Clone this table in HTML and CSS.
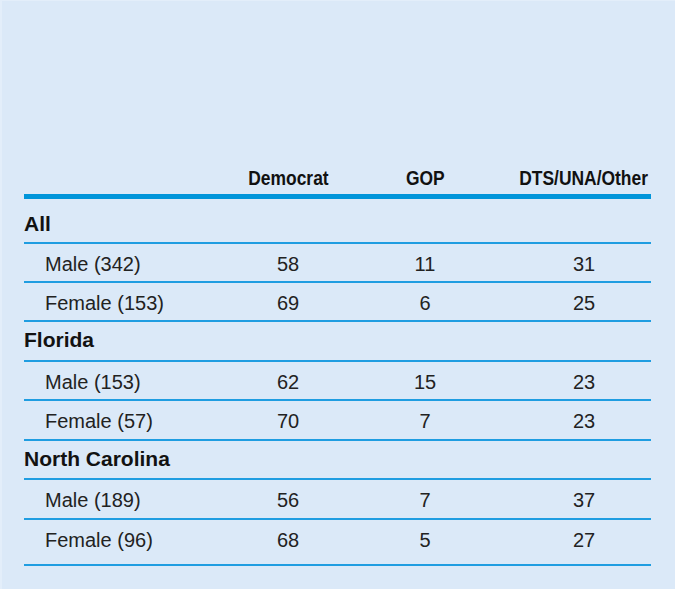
FILE: index.html
```html
<!DOCTYPE html>
<html lang="en">
<head>
<meta charset="utf-8">
<title>Party affiliation by gender</title>
<link rel="stylesheet" href="styles.css">
</head>
<body>
<div class="panel">
  <div class="table">
    <div class="row head">
      <div class="cell"></div>
      <div class="cell hcell"><span class="hd">Democrat</span></div>
      <div class="cell hcell gop"><span class="hd">GOP</span></div>
      <div class="cell hcell"><span class="hd">DTS/UNA/Other</span></div>
    </div>

    <div class="row group first"><div class="cell">All</div></div>
    <div class="row data"><div class="cell label">Male (342)</div><div class="cell num">58</div><div class="cell num gop">11</div><div class="cell num">31</div></div>
    <div class="row data"><div class="cell label">Female (153)</div><div class="cell num">69</div><div class="cell num gop">6</div><div class="cell num">25</div></div>

    <div class="row group"><div class="cell">Florida</div></div>
    <div class="row data"><div class="cell label">Male (153)</div><div class="cell num">62</div><div class="cell num gop">15</div><div class="cell num">23</div></div>
    <div class="row data"><div class="cell label">Female (57)</div><div class="cell num">70</div><div class="cell num gop">7</div><div class="cell num">23</div></div>

    <div class="row group"><div class="cell">North Carolina</div></div>
    <div class="row data"><div class="cell label">Male (189)</div><div class="cell num">56</div><div class="cell num gop">7</div><div class="cell num">37</div></div>
    <div class="row data last"><div class="cell label">Female (96)</div><div class="cell num">68</div><div class="cell num gop">5</div><div class="cell num">27</div></div>
  </div>
</div>
</body>
</html>
```

FILE: styles.css
```css
html, body {
  margin: 0;
  padding: 0;
}

body {
  background: #dbe9f8;
  font-family: "Liberation Sans", Arial, sans-serif;
  color: #1c1c1c;
}

.panel {
  width: 675px;
  height: 589px;
  box-sizing: border-box;
  padding: 166px 24px 0 24px;
  background: #dbe9f8;
  border-left: 2px solid #e3eefa;
  border-top: 1px solid #e3eefa;
}

.table {
  width: 627px;
  margin-left: -2px;
}

.row {
  display: grid;
  grid-template-columns: 221px 86px 186px 134px;
  box-sizing: border-box;
}

.cell {
  white-space: nowrap;
  min-width: 0;
}

.num {
  text-align: center;
}

.hcell {
  display: flex;
  justify-content: center;
}

.gop {
  padding-left: 2px;
}

.head {
  font-size: 21px;
  line-height: 21px;
  font-weight: bold;
  color: #111;
  padding-bottom: 6px;
  border-bottom: 5px solid #0095da;
}

.hd {
  display: inline-block;
  flex: none;
  transform: scaleX(0.83);
  transform-origin: center;
}

.group {
  height: 39.45px;
  padding-top: 7px;
  font-size: 21px;
  line-height: 21px;
  font-weight: bold;
  color: #121212;
  border-bottom: 2px solid #1f9de1;
}

.group.first {
  height: 44.5px;
  padding-top: 13.5px;
}

.data {
  height: 39.45px;
  padding-top: 10px;
  font-size: 20px;
  line-height: 20px;
  color: #222;
  border-bottom: 2px solid #1f9de1;
}

.data.last {
  height: 46px;
}

.label {
  padding-left: 21px;
}
```
